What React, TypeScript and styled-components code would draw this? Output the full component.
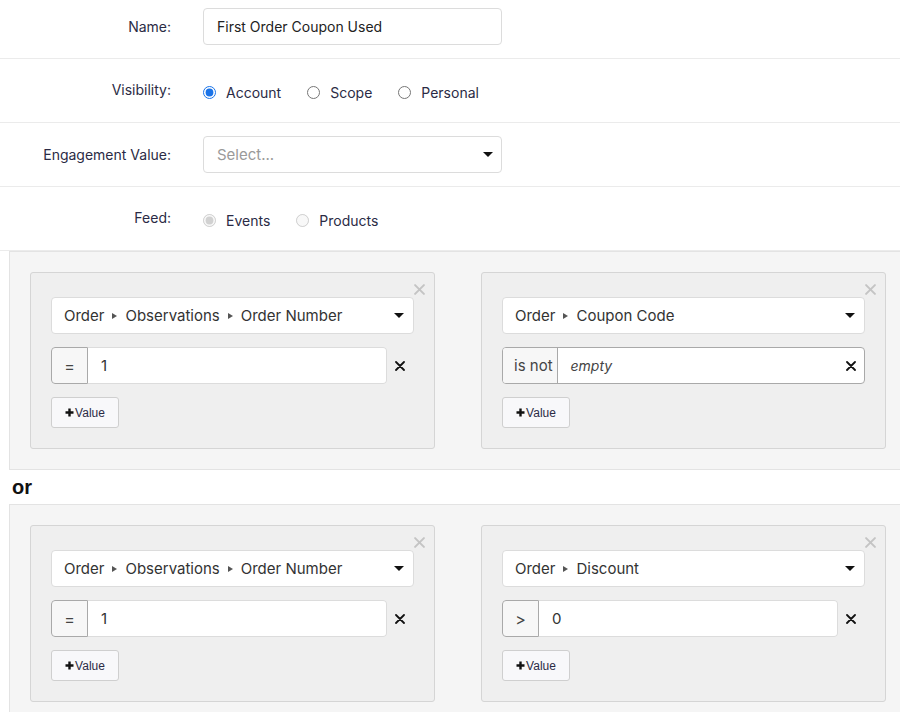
import React from "react";
import styled, { createGlobalStyle } from "styled-components";

const GlobalStyle = createGlobalStyle`
  html, body {
    margin: 0;
    padding: 0;
    overflow: hidden;
    background: #ffffff;
  }
  body {
    font-family: Inter, "Noto Sans", sans-serif;
    color: #2b2b45;
  }
`;

const Page = styled.div`
  width: 900px;
`;

const FormRow = styled.div<{ first?: boolean }>`
  display: flex;
  align-items: center;
  padding: ${({ first }) => (first ? "8px 0 13px" : "13px 0")};
  border-bottom: 1px solid #ebebeb;
  min-height: 37px;
`;

const Label = styled.label<{ low?: boolean }>`
  width: 171px;
  padding-right: 32px;
  box-sizing: content-box;
  text-align: right;
  font-size: 14px;
  color: #2b2b45;
  margin-top: ${({ low }) => (low ? "0" : "-2px")};
`;

const TextInput = styled.div`
  width: 299px;
  height: 37px;
  box-sizing: border-box;
  border: 1px solid #dcdcdc;
  border-radius: 4px;
  padding: 0 13px;
  display: flex;
  align-items: center;
  font-size: 14px;
  color: #222;
`;

const SelectBox = styled(TextInput)`
  justify-content: space-between;
  padding-right: 8px;
  font-size: 15px;
`;

const Placeholder = styled.span`
  color: #9a9a9a;
`;

const Caret = styled.span`
  width: 0;
  height: 0;
  border-left: 5px solid transparent;
  border-right: 5px solid transparent;
  border-top: 5px solid #111;
`;

const RadioGroup = styled.div`
  display: flex;
  align-items: center;
  gap: 26px;
  font-size: 14px;
  margin-top: 3px;
`;

const RadioOption = styled.label`
  display: flex;
  align-items: center;
  gap: 10px;
  color: #2b2b45;

  input {
    margin: 0;
    width: 13px;
    height: 13px;
    accent-color: #1a73e8;
  }
`;

const Groups = styled.div`
  margin-left: 9px;
`;

const OrGroup = styled.div`
  width: 898px;
  box-sizing: border-box;
  background: #f5f5f5;
  border: 1px solid #e3e3e3;
  padding: 20px;
  display: grid;
  grid-template-columns: 405px 405px;
  column-gap: 46px;
`;

const OrLabel = styled.div`
  font-family: "Liberation Sans", Arial, sans-serif;
  font-weight: bold;
  font-size: 20px;
  color: #111;
  height: 34px;
  line-height: 34px;
  padding-left: 3px;
`;

const Card = styled.div`
  position: relative;
  background: #efefef;
  border: 1px solid #d5d5d5;
  border-radius: 3px;
  padding: 24px 20px 20px;
  display: flex;
  flex-direction: column;
  gap: 13px;
`;

const RemoveCard = styled.button`
  position: absolute;
  top: 11px;
  right: 9px;
  border: none;
  background: none;
  padding: 0;
  width: 11px;
  height: 11px;
  display: flex;
`;

const FieldSelect = styled.div`
  height: 37px;
  box-sizing: border-box;
  background: #fff;
  border: 1px solid #dcdcdc;
  border-radius: 4px;
  padding: 0 9px 0 12px;
  display: flex;
  align-items: center;
  justify-content: space-between;
  font-size: 15px;
  color: #333;
`;

const Path = styled.span`
  display: flex;
  align-items: center;
`;

const PathSep = styled.span`
  width: 0;
  height: 0;
  margin: 0 8px;
  border-top: 3px solid transparent;
  border-bottom: 3px solid transparent;
  border-left: 5px solid #555;
`;

const ValueRow = styled.div`
  display: flex;
  align-items: center;
`;

const InputGroup = styled.div<{ framed?: boolean }>`
  display: flex;
  width: ${({ framed }) => (framed ? "363px" : "336px")};
  height: 37px;
  box-sizing: border-box;
  background: #fff;
  border-radius: 4px;
  border: ${({ framed }) => (framed ? "1px solid #a9a9a9" : "none")};
  font-size: 15px;
  color: #333;
`;

const Operator = styled.div<{ framed?: boolean }>`
  display: flex;
  align-items: center;
  justify-content: center;
  min-width: 37px;
  padding: ${({ framed }) => (framed ? "0 4px 0 11px" : "0")};
  box-sizing: border-box;
  background: #f7f7f7;
  border: ${({ framed }) => (framed ? "none" : "1px solid #a9a9a9")};
  border-right: 1px solid #a9a9a9;
  border-radius: ${({ framed }) => (framed ? "3px 0 0 3px" : "4px 0 0 4px")};
  font-size: ${({ framed }) => (framed ? "15px" : "16px")};
  color: #444;
`;

const ValueField = styled.div<{ framed?: boolean }>`
  flex: 1;
  display: flex;
  align-items: center;
  justify-content: space-between;
  padding: 0 8px 0 13px;
  border: ${({ framed }) => (framed ? "none" : "1px solid #dcdcdc")};
  border-left: none;
  border-radius: 0 4px 4px 0;
`;

const Empty = styled.span`
  font-style: italic;
  font-size: 14px;
  color: #444;
`;

const ClearValue = styled.button<{ outside?: boolean }>`
  border: none;
  background: none;
  padding: 0;
  margin-left: ${({ outside }) => (outside ? "8px" : "0")};
  width: 10px;
  height: 10px;
  display: flex;
`;

const AddValue = styled.button`
  align-self: flex-start;
  height: 31px;
  width: 68px;
  box-sizing: border-box;
  background: #f8f8fa;
  border: 1px solid #cfcfcf;
  border-radius: 3px;
  font-family: "Liberation Sans", Arial, sans-serif;
  font-size: 12px;
  color: #2b2b45;
  display: flex;
  align-items: center;
  justify-content: center;
  padding: 0;
`;

const PlusMark = styled.svg`
  margin-right: 1px;
`;

const Cross = ({ color, weight }: { color: string; weight: number }) => (
  <svg width="100%" height="100%" viewBox="0 0 10 10">
    <path d="M1 1 L9 9 M9 1 L1 9" stroke={color} strokeWidth={weight} strokeLinecap="round" />
  </svg>
);

const Plus = () => (
  <PlusMark width="9" height="9" viewBox="0 0 9 9">
    <path d="M4.5 0.5 V8.5 M0.5 4.5 H8.5" stroke="#111" strokeWidth="2.4" />
  </PlusMark>
);

type Condition = {
  path: string[];
  op: string;
  value?: string;
};

const groups: Condition[][] = [
  [
    { path: ["Order", "Observations", "Order Number"], op: "=", value: "1" },
    { path: ["Order", "Coupon Code"], op: "is not" },
  ],
  [
    { path: ["Order", "Observations", "Order Number"], op: "=", value: "1" },
    { path: ["Order", "Discount"], op: ">", value: "0" },
  ],
];

const ConditionCard = ({ c }: { c: Condition }) => {
  // no value means an "is empty"/"is not empty" test, drawn as one framed group
  const framed = c.value === undefined;
  return (
    <Card>
      <RemoveCard>
        <Cross color="#c4c4c4" weight={1.8} />
      </RemoveCard>
      <FieldSelect>
        <Path>
          {c.path.map((p, i) => (
            <React.Fragment key={p}>
              {i > 0 && <PathSep />}
              {p}
            </React.Fragment>
          ))}
        </Path>
        <Caret />
      </FieldSelect>
      <ValueRow>
        <InputGroup framed={framed}>
          <Operator framed={framed}>{c.op}</Operator>
          <ValueField framed={framed}>
            {framed ? <Empty>empty</Empty> : c.value}
            {framed && (
              <ClearValue>
                <Cross color="#111" weight={1.8} />
              </ClearValue>
            )}
          </ValueField>
        </InputGroup>
        {!framed && (
          <ClearValue outside>
            <Cross color="#111" weight={1.8} />
          </ClearValue>
        )}
      </ValueRow>
      <AddValue>
        <Plus />
        Value
      </AddValue>
    </Card>
  );
};

export default function App() {
  return (
    <Page>
      <GlobalStyle />
      <FormRow first>
        <Label low>Name:</Label>
        <TextInput>First Order Coupon Used</TextInput>
      </FormRow>
      <FormRow>
        <Label>Visibility:</Label>
        <RadioGroup>
          <RadioOption>
            <input type="radio" name="visibility" defaultChecked />
            Account
          </RadioOption>
          <RadioOption>
            <input type="radio" name="visibility" />
            Scope
          </RadioOption>
          <RadioOption>
            <input type="radio" name="visibility" />
            Personal
          </RadioOption>
        </RadioGroup>
      </FormRow>
      <FormRow>
        <Label low>Engagement Value:</Label>
        <SelectBox>
          <Placeholder>Select...</Placeholder>
          <Caret />
        </SelectBox>
      </FormRow>
      <FormRow>
        <Label>Feed:</Label>
        <RadioGroup>
          <RadioOption>
            <input type="radio" name="feed" defaultChecked disabled />
            Events
          </RadioOption>
          <RadioOption>
            <input type="radio" name="feed" disabled />
            Products
          </RadioOption>
        </RadioGroup>
      </FormRow>
      <Groups>
        {groups.map((g, gi) => (
          <React.Fragment key={gi}>
            {gi > 0 && <OrLabel>or</OrLabel>}
            <OrGroup>
              {g.map((c, ci) => (
                <ConditionCard key={ci} c={c} />
              ))}
            </OrGroup>
          </React.Fragment>
        ))}
      </Groups>
    </Page>
  );
}
